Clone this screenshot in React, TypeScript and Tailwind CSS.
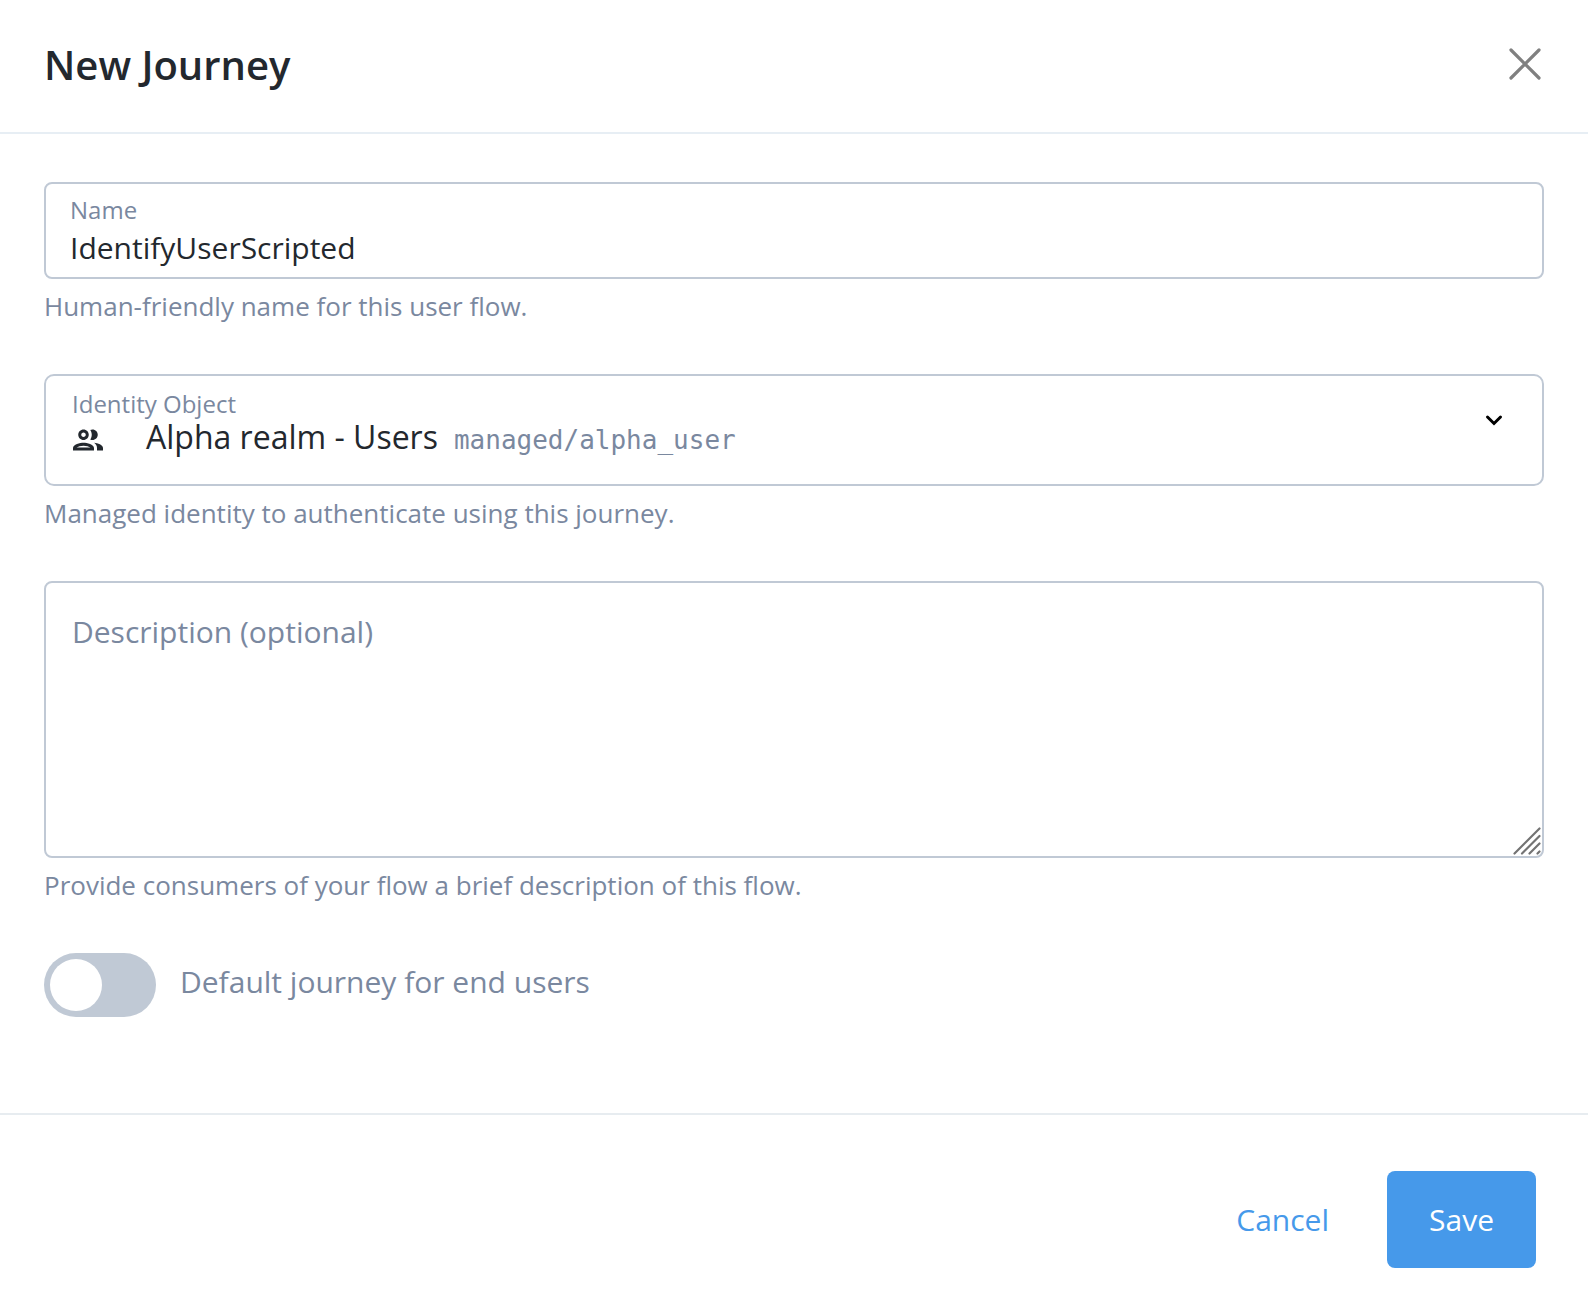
import { useState } from "react";

function HelpText({ id, children }: { id: string; children: string }) {
  return (
    <p id={id} className="mt-[7px] text-[26px] leading-10 text-[#7a889f]">
      {children}
    </p>
  );
}

function CloseIcon() {
  return (
    <svg width="32" height="32" viewBox="0 0 32 32" fill="none" stroke="#808080" strokeWidth="3.2" strokeLinecap="round" aria-hidden="true">
      <path d="M2 2l28 28M30 2L2 30" />
    </svg>
  );
}

function PeopleIcon() {
  return (
    <svg width="36" height="36" viewBox="0 0 24 24" fill="currentColor" aria-hidden="true">
      <path d="M9 13.75c-2.34 0-7 1.17-7 3.5V19h14v-1.75c0-2.33-4.66-3.5-7-3.5zM4.34 17c.84-.58 2.87-1.25 4.66-1.25s3.82.67 4.66 1.25H4.34zM9 12c1.93 0 3.5-1.57 3.5-3.5S10.93 5 9 5 5.5 6.57 5.5 8.5 7.07 12 9 12zm0-5c.83 0 1.5.67 1.5 1.5S9.83 10 9 10s-1.5-.67-1.5-1.5S8.17 7 9 7zm7.04 6.81c1.16.84 1.96 1.96 1.96 3.44V19h4v-1.75c0-2.02-3.5-3.17-5.96-3.44zM15 12c1.93 0 3.5-1.57 3.5-3.5S16.93 5 15 5c-.54 0-1.04.13-1.5.35.63.89 1 1.98 1 3.15s-.37 2.26-1 3.15c.46.22.96.35 1.5.35z" />
    </svg>
  );
}

function ChevronIcon() {
  return (
    <svg width="20" height="20" viewBox="0 0 20 20" fill="none" stroke="#000" strokeWidth="3" strokeLinecap="round" aria-hidden="true">
      <path d="M3.5 7l6.5 6.5L16.5 7" />
    </svg>
  );
}

function GripIcon() {
  return (
    <svg className="pointer-events-none absolute right-[3px] bottom-[3px]" width="28" height="28" viewBox="0 0 28 28" fill="none" stroke="#737373" strokeWidth="2.2" strokeLinecap="round" aria-hidden="true">
      <path d="M1.5 26.5l25-25M9 26.5L26.5 9M16.5 26.5l10-10M24.5 26.5l2-2" />
    </svg>
  );
}

export default function App() {
  const [name, setName] = useState("IdentifyUserScripted");

  return (
    <form
      onSubmit={(event) => event.preventDefault()}
      className="min-h-screen bg-white font-['Open_Sans',sans-serif] text-[#23282e]"
    >
      <header className="flex items-center justify-between border-b-2 border-[#e7eef4] pt-[35px] pr-[47px] pb-[39px] pl-11">
        <h1 className="pt-0.5 text-[40px] leading-14 font-semibold">New Journey</h1>
        <button type="button" aria-label="Close">
          <CloseIcon />
        </button>
      </header>

      <main className="flex flex-col gap-12 px-11 pt-12 pb-24">
        <div>
          <div className="rounded-lg border-2 border-[#c0c9d5] px-6 pt-[7px] pb-2.5">
            <label htmlFor="name" className="block text-[24px] leading-[38px] text-[#7a889f]">
              Name
            </label>
            <input
              id="name"
              type="text"
              value={name}
              onChange={(event) => setName(event.target.value)}
              aria-describedby="name-help"
              className="block h-[38px] w-full text-[30px] leading-[38px] outline-none"
            />
          </div>
          <HelpText id="name-help">Human-friendly name for this user flow.</HelpText>
        </div>

        <div>
          <div className="relative flex items-start justify-between rounded-[10px] border-2 border-[#c0c9d5] pt-3 pr-[38px] pb-6 pl-6">
            <div>
              <label htmlFor="identity" className="block pl-0.5 text-[24px] leading-8 text-[#7a889f]">
                Identity Object
              </label>
              <div className="flex h-10 items-center">
                <PeopleIcon />
                <div className="ml-10 flex items-baseline gap-4 pb-1.5">
                  <span className="text-[32px] leading-10">Alpha realm - Users</span>
                  <span className="font-['DejaVu_Sans_Mono',monospace] text-[26px] leading-8 text-[#7a889f]">
                    managed/alpha_user
                  </span>
                </div>
              </div>
            </div>
            <div className="pt-[22px]">
              <ChevronIcon />
            </div>
            <select
              id="identity"
              aria-describedby="identity-help"
              className="absolute inset-0 h-full w-full cursor-pointer appearance-none opacity-0"
            >
              <option>Alpha realm - Users</option>
            </select>
          </div>
          <HelpText id="identity-help">Managed identity to authenticate using this journey.</HelpText>
        </div>

        <div>
          <div className="relative">
            <textarea
              aria-label="Description (optional)"
              placeholder="Description (optional)"
              aria-describedby="description-help"
              className="block h-[277px] w-full resize-none rounded-lg border-2 border-[#c0c9d5] px-[26px] py-[27px] text-[30px] leading-11 outline-none placeholder:text-[#7a889f]"
            />
            <GripIcon />
          </div>
          <HelpText id="description-help">
            Provide consumers of your flow a brief description of this flow.
          </HelpText>
        </div>

        <div className="flex items-center gap-6">
          <input
            id="default-journey"
            type="checkbox"
            role="switch"
            className="h-16 w-28 shrink-0 cursor-pointer appearance-none rounded-full bg-[#c0c9d5] p-1.5 before:block before:size-[52px] before:rounded-full before:bg-white before:transition-transform checked:bg-[#4699ea] checked:before:translate-x-12"
          />
          <label htmlFor="default-journey" className="pb-1.5 text-[30px] leading-11 text-[#7a889f]">
            Default journey for end users
          </label>
        </div>
      </main>

      <footer className="flex items-center justify-end gap-4 border-t-2 border-[#e7ecf0] pt-14 pr-[52px] pb-[46px] text-[30px] leading-[45px]">
        <button type="button" className="rounded-lg px-[42px] py-[26px] text-[#4699ea]">
          Cancel
        </button>
        <button type="submit" className="rounded-lg bg-[#4699ea] px-[42px] py-[26px] text-white">
          Save
        </button>
      </footer>
    </form>
  );
}
